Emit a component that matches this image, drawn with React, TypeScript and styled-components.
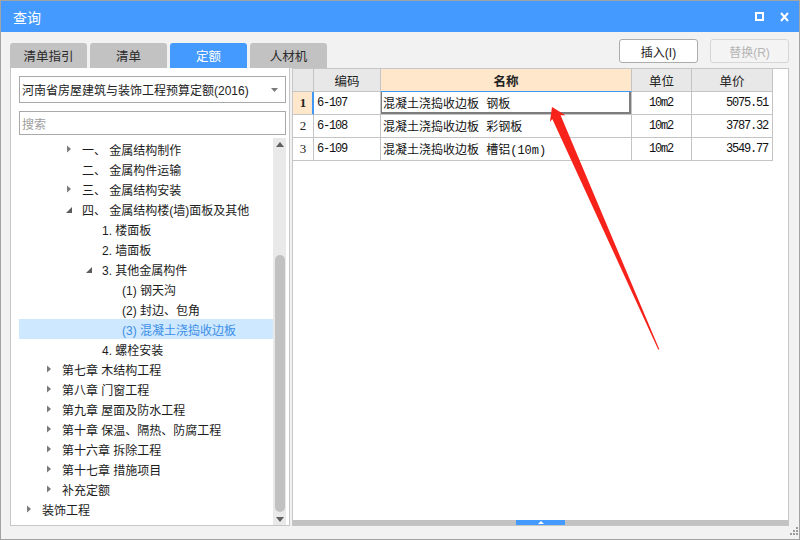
import { Fragment } from "react";
import styled, { createGlobalStyle } from "styled-components";

const GlobalStyle = createGlobalStyle`
  html, body { margin: 0; padding: 0; background: #f2f2f2; }
  body {
    font-family: "Liberation Sans", "Noto Sans CJK SC", sans-serif;
    font-size: 12px;
    color: #222;
  }
  * { box-sizing: border-box; }
`;

const Window = styled.div`
  position: relative;
  width: 800px;
  height: 540px;
  border: 1px solid #a3a3a3;
  background: #f2f2f2;
  display: flex;
  flex-direction: column;
  overflow: hidden;
`;

const TitleBar = styled.div`
  height: 31px;
  flex-shrink: 0;
  background: #449afe;
  color: #fff;
  display: flex;
  align-items: center;
  justify-content: space-between;
  padding: 0 10px 0 12px;
`;

const Title = styled.span`
  font-size: 14px;
  font-family: "Noto Sans CJK SC", sans-serif;
`;

const Controls = styled.div`
  display: flex;
  align-items: center;
  gap: 16px;
`;

const MaxBox = styled.span`
  width: 9px;
  height: 9px;
  border: 2px solid #fff;
`;

const Toolbar = styled.div`
  height: 36px;
  flex-shrink: 0;
  display: flex;
  justify-content: space-between;
  padding: 0 10px 0 9px;
`;

const Tabs = styled.div`
  display: flex;
  gap: 3px;
  align-self: flex-end;
`;

const Tab = styled.div<{ $active?: boolean }>`
  width: 77px;
  height: 25px;
  border-radius: 3px 3px 0 0;
  background: ${(p) => (p.$active ? "#449afe" : "#c2c2c2")};
  color: ${(p) => (p.$active ? "#fff" : "#2a2a2a")};
  display: flex;
  align-items: center;
  justify-content: center;
  font-size: 12.5px;
`;

const Buttons = styled.div`
  display: flex;
  gap: 12px;
  padding-top: 7px;
`;

const Button = styled.button<{ $disabled?: boolean }>`
  width: 79px;
  height: 24px;
  border-radius: 3px;
  border: 1px solid ${(p) => (p.$disabled ? "#d6d6d6" : "#acacac")};
  background: ${(p) => (p.$disabled ? "#f4f4f4" : "#fff")};
  color: ${(p) => (p.$disabled ? "#b4b4b4" : "#222")};
  font-family: "Liberation Sans", "Noto Sans CJK SC", sans-serif;
  font-size: 12px;
  padding: 0;
`;

const Content = styled.div`
  height: 458px;
  flex-shrink: 0;
  display: flex;
  gap: 2px;
  padding: 0 10px 0 9px;
`;

const LeftPanel = styled.div`
  width: 280px;
  flex-shrink: 0;
  background: #fff;
  border: 1px solid #c6c6c6;
  border-top: none;
  padding: 8px 3px 0 8px;
  display: flex;
  flex-direction: column;
`;

const Select = styled.div`
  height: 27px;
  border: 1px solid #a9a9a9;
  display: flex;
  align-items: center;
  justify-content: space-between;
  padding: 0 7px 0 2px;
  font-size: 12px;
`;

const Search = styled.div`
  margin-top: 8px;
  height: 24px;
  border: 1px solid #a9a9a9;
  display: flex;
  align-items: center;
  padding-left: 2px;
  color: #a0a0a0;
  font-size: 12px;
`;

const TreeBox = styled.div`
  margin-top: 3px;
  flex: 1;
  min-height: 0;
  display: flex;
`;

const TreeList = styled.div`
  flex: 1;
  padding-top: 1px;
`;

const TreeRow = styled.div<{ $level: number; $selected?: boolean }>`
  height: 20px;
  display: flex;
  align-items: center;
  padding-left: ${(p) => 4 + p.$level * 20}px;
  background: ${(p) => (p.$selected ? "#cde8ff" : "transparent")};
  color: ${(p) => (p.$selected ? "#3b8ee8" : "#1c1c1c")};
  white-space: pre;
`;

const Toggle = styled.span`
  width: 19px;
  height: 10px;
  flex-shrink: 0;
  padding-left: 2px;
  display: flex;
`;

const ScrollBar = styled.div`
  width: 13px;
  background: #e9e9e9;
  display: flex;
  flex-direction: column;
  align-items: center;
`;

const ScrollArrow = styled.div`
  height: 12px;
  display: flex;
  align-items: center;
  justify-content: center;
`;

const Track = styled.div`
  flex: 1;
  display: flex;
  flex-direction: column;
  justify-content: flex-end;
  padding-bottom: 1px;
`;

const Thumb = styled.div`
  width: 10px;
  height: 257px;
  border-radius: 5px;
  background: #c1c1c1;
`;

const RightPanel = styled.div`
  flex: 1;
  background: #fff;
  border: 1px solid #c6c6c6;
  display: flex;
  flex-direction: column;
`;

const Grid = styled.div`
  display: grid;
  grid-template-columns: 21px 67px 251px 60px 81px;
  grid-auto-rows: 23px;
  width: 480px;
`;

const HeadCell = styled.div<{ $accent?: boolean }>`
  background: ${(p) => (p.$accent ? "#fee7ca" : "#e8e8e8")};
  border-right: 1px solid #c4c4c4;
  border-bottom: 1px solid ${(p) => (p.$accent ? "#3f98f5" : "#c4c4c4")};
  font-weight: ${(p) => (p.$accent ? 700 : 400)};
  display: flex;
  align-items: center;
  justify-content: center;
  font-size: 12.5px;
`;

const RowNum = styled.div<{ $active?: boolean }>`
  background: ${(p) => (p.$active ? "#fee7ca" : "#fff")};
  border-right: 1px solid ${(p) => (p.$active ? "#3f98f5" : "#c4c4c4")};
  box-shadow: ${(p) => (p.$active ? "inset -1px 0 0 #3f98f5" : "none")};
  border-bottom: 1px solid #c4c4c4;
  font-family: "Liberation Serif", serif;
  font-size: 13px;
  font-weight: ${(p) => (p.$active ? 700 : 400)};
  display: flex;
  align-items: center;
  justify-content: center;
`;

const Cell = styled.div<{ $align?: "left" | "center" | "right"; $mono?: boolean; $active?: boolean }>`
  border-right: 1px solid #c4c4c4;
  border-bottom: 1px solid #c4c4c4;
  display: flex;
  align-items: center;
  justify-content: ${(p) =>
    p.$align === "right" ? "flex-end" : p.$align === "center" ? "center" : "flex-start"};
  padding: ${(p) => (p.$mono ? "0 4px 0 3px" : "0 3px 0 2px")};
  font-family: ${(p) =>
    p.$mono ? '"Liberation Mono", monospace' : '"Liberation Mono", "Noto Sans CJK SC", monospace'};
  font-size: 12px;
  letter-spacing: ${(p) => (p.$mono ? "-1.2px" : "0")};
  color: #111;
  white-space: pre;
  box-shadow: ${(p) => (p.$active ? "inset 1px 0 0 #7d7d7d, inset -2px -2px 0 #7d7d7d" : "none")};
`;

const Spacer = styled.div`
  flex: 1;
`;

const BottomBar = styled.div`
  height: 5px;
  background: #c2c2c2;
  display: flex;
  justify-content: center;
`;

const Handle = styled.div`
  width: 49px;
  background: #449afe;
  display: flex;
  align-items: center;
  justify-content: center;
`;

const Footer = styled.div`
  flex: 1;
  display: flex;
  justify-content: flex-end;
  align-items: flex-end;
  padding: 0 1px 4px 0;
`;

const Overlay = styled.svg`
  position: absolute;
  top: -1px;
  left: -1px;
  pointer-events: none;
`;

type Node = { level: number; label: string; toggle?: "open" | "closed"; selected?: boolean };

const tree: Node[] = [
  { level: 2, label: "一、 金属结构制作", toggle: "closed" },
  { level: 2, label: "二、 金属构件运输" },
  { level: 2, label: "三、 金属结构安装", toggle: "closed" },
  { level: 2, label: "四、 金属结构楼(墙)面板及其他", toggle: "open" },
  { level: 3, label: "1. 楼面板" },
  { level: 3, label: "2. 墙面板" },
  { level: 3, label: "3. 其他金属构件", toggle: "open" },
  { level: 4, label: "(1) 钢天沟" },
  { level: 4, label: "(2) 封边、包角" },
  { level: 4, label: "(3) 混凝土浇捣收边板", selected: true },
  { level: 3, label: "4. 螺栓安装" },
  { level: 1, label: "第七章 木结构工程", toggle: "closed" },
  { level: 1, label: "第八章 门窗工程", toggle: "closed" },
  { level: 1, label: "第九章 屋面及防水工程", toggle: "closed" },
  { level: 1, label: "第十章 保温、隔热、防腐工程", toggle: "closed" },
  { level: 1, label: "第十六章 拆除工程", toggle: "closed" },
  { level: 1, label: "第十七章 措施项目", toggle: "closed" },
  { level: 1, label: "补充定额", toggle: "closed" },
  { level: 0, label: "装饰工程", toggle: "closed" },
];

const rows = [
  { code: "6-107", name: "混凝土浇捣收边板 钢板", unit: "10m2", price: "5075.51" },
  { code: "6-108", name: "混凝土浇捣收边板 彩钢板", unit: "10m2", price: "3787.32" },
  { code: "6-109", name: "混凝土浇捣收边板 槽铝(10m)", unit: "10m2", price: "3549.77" },
];

function ToggleIcon({ kind }: { kind?: "open" | "closed" }) {
  if (!kind) return null;
  return (
    <svg width="10" height="10" viewBox="0 0 10 10">
      {kind === "closed" ? (
        <path d="M2 1.5 L6 5 L2 8.5 Z" fill="#7a7a7a" />
      ) : (
        <path d="M7 3 L7 9 L1 9 Z" fill="#5c5c5c" />
      )}
    </svg>
  );
}

export default function App() {
  return (
    <>
      <GlobalStyle />
      <Window>
        <TitleBar>
          <Title>查询</Title>
          <Controls>
            <MaxBox />
            <svg width="9" height="10" viewBox="0 0 9 10">
              <path d="M1 1 L8 9 M8 1 L1 9" stroke="#fff" strokeWidth="2" />
            </svg>
          </Controls>
        </TitleBar>

        <Toolbar>
          <Tabs>
            <Tab>清单指引</Tab>
            <Tab>清单</Tab>
            <Tab $active>定额</Tab>
            <Tab>人材机</Tab>
          </Tabs>
          <Buttons>
            <Button>插入(I)</Button>
            <Button $disabled>替换(R)</Button>
          </Buttons>
        </Toolbar>

        <Content>
          <LeftPanel>
            <Select>
              <span>河南省房屋建筑与装饰工程预算定额(2016)</span>
              <svg width="7" height="4" viewBox="0 0 7 4">
                <path d="M0 0 L7 0 L3.5 4 Z" fill="#7a7a7a" />
              </svg>
            </Select>
            <Search>搜索</Search>
            <TreeBox>
              <TreeList>
                {tree.map((n) => (
                  <TreeRow key={n.label} $level={n.level} $selected={n.selected}>
                    <Toggle>
                      <ToggleIcon kind={n.toggle} />
                    </Toggle>
                    {n.label}
                  </TreeRow>
                ))}
              </TreeList>
              <ScrollBar>
                <ScrollArrow>
                  <svg width="8" height="5" viewBox="0 0 8 5">
                    <path d="M0 5 L8 5 L4 0 Z" fill="#606060" />
                  </svg>
                </ScrollArrow>
                <Track>
                  <Thumb />
                </Track>
                <ScrollArrow>
                  <svg width="8" height="5" viewBox="0 0 8 5">
                    <path d="M0 0 L8 0 L4 5 Z" fill="#606060" />
                  </svg>
                </ScrollArrow>
              </ScrollBar>
            </TreeBox>
          </LeftPanel>

          <RightPanel>
            <Grid>
              <HeadCell />
              <HeadCell>编码</HeadCell>
              <HeadCell $accent>名称</HeadCell>
              <HeadCell>单位</HeadCell>
              <HeadCell>单价</HeadCell>
              {rows.map((r, i) => (
                <Fragment key={r.code}>
                  <RowNum $active={i === 0}>{i + 1}</RowNum>
                  <Cell $mono>{r.code}</Cell>
                  <Cell $active={i === 0}>{r.name}</Cell>
                  <Cell $mono $align="center">{r.unit}</Cell>
                  <Cell $mono $align="right">{r.price}</Cell>
                </Fragment>
              ))}
            </Grid>
            <Spacer />
            <BottomBar>
              <Handle>
                <svg width="6" height="3" viewBox="0 0 6 3">
                  <path d="M0 3 L6 3 L3 0 Z" fill="#fff" />
                </svg>
              </Handle>
            </BottomBar>
          </RightPanel>
        </Content>

        <Footer>
          <svg width="9" height="8" viewBox="0 0 9 8">
            <g fill="#9c9c9c">
              <rect x="7" y="0" width="2" height="2" />
              <rect x="4" y="3" width="2" height="2" />
              <rect x="7" y="3" width="2" height="2" />
              <rect x="1" y="6" width="2" height="2" />
              <rect x="4" y="6" width="2" height="2" />
              <rect x="7" y="6" width="2" height="2" />
            </g>
          </svg>
        </Footer>

        <Overlay width="800" height="540" viewBox="0 0 800 540">
          <polygon
            points="552,107 565.5,115.3 560.6,115.3 659.3,349.3 658.3,349.7 552.3,118.9 549.9,122.1"
            fill="#f7231b"
          />
        </Overlay>
      </Window>
    </>
  );
}
